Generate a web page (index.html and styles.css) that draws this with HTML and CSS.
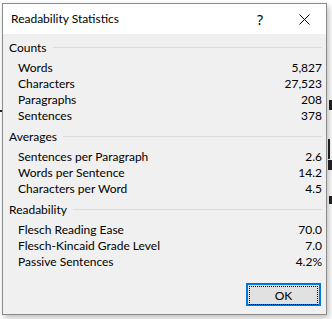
FILE: index.html
```html
<!DOCTYPE html>
<html lang="en">
<head>
    <meta charset="UTF-8">
    <title>Readability Statistics</title>
    <link rel="stylesheet" href="styles.css">
</head>
<body>
    <!-- bits of the document showing behind the dialog -->
    <div class="doc">
        <i class="mark m1"></i>
        <i class="mark m2"></i>
        <i class="mark m3"></i>
        <i class="mark m4"></i>
        <i class="mark m5"></i>
    </div>

    <div class="dialog">
        <div class="titlebar">
            <span class="title">Readability Statistics</span>
            <span class="tb-btn help">?</span>
            <span class="tb-btn">
                <svg width="11" height="11" viewBox="0 0 11 11"><path d="M0.5 0.5L10.5 10.5M10.5 0.5L0.5 10.5" stroke="#000" stroke-width="1" fill="none"/></svg>
            </span>
        </div>

        <div class="content">
            <div class="section">
                <div class="section-head"><span>Counts</span><i></i></div>
                <div class="row"><span>Words</span><span>5,827</span></div>
                <div class="row"><span>Characters</span><span>27,523</span></div>
                <div class="row"><span>Paragraphs</span><span>208</span></div>
                <div class="row"><span>Sentences</span><span>378</span></div>
            </div>
            <div class="section">
                <div class="section-head"><span>Averages</span><i></i></div>
                <div class="row"><span>Sentences per Paragraph</span><span>2.6</span></div>
                <div class="row"><span>Words per Sentence</span><span>14.2</span></div>
                <div class="row"><span>Characters per Word</span><span>4.5</span></div>
            </div>
            <div class="section">
                <div class="section-head"><span>Readability</span><i></i></div>
                <div class="row"><span>Flesch Reading Ease</span><span>70.0</span></div>
                <div class="row"><span>Flesch-Kincaid Grade Level</span><span>7.0</span></div>
                <div class="row"><span>Passive Sentences</span><span>4.2%</span></div>
            </div>

            <div class="footer">
                <button class="ok-button"><span>OK</span></button>
            </div>
        </div>
    </div>
</body>
</html>
```

FILE: styles.css
```css
body {
    margin: 0;
    width: 332px;
    height: 319px;
    overflow: hidden;
    background-color: #fff;
    font-family: Lato, "Noto Sans", sans-serif;
    font-size: 12px;
    color: #000;
    position: relative;
}
.doc {
    position: absolute;
    inset: 0;
}
.mark {
    position: absolute;
    background-color: #222;
}
.m1 { left: 329px; top: 100px; width: 3px; height: 10px; }
.m2 { left: 328px; top: 139px; width: 2px; height: 20px; }
.m3 { left: 328px; top: 160px; width: 4px; height: 10px; }
.m4 { left: 329px; top: 196px; width: 3px; height: 8px; }
.m5 { left: 0; top: 110px; width: 2px; height: 2px; }

.dialog {
    position: relative;
    margin: 3px 0 0 2px;
    width: 323px;
    height: 310px;
    border: 1px solid #8a8a8a;
    background-color: #f0f0f0;
    display: flex;
    flex-direction: column;
    box-shadow: 2px 3px 6px rgba(0, 0, 0, 0.25);
}
.titlebar {
    height: 30px;
    background-color: #fff;
    display: flex;
    align-items: center;
}
.title {
    flex: 1;
    padding-left: 8px;
    line-height: 30px;
}
.tb-btn {
    width: 44px;
    height: 30px;
    display: flex;
    align-items: center;
    justify-content: center;
}
.help {
    font-family: "Noto Sans", sans-serif;
    font-size: 14px;
}
.content {
    flex: 1;
    padding: 5px 4px 0 6px;
    display: flex;
    flex-direction: column;
}
.section {
    margin-bottom: 4px;
}
.section-head {
    display: flex;
    align-items: center;
    height: 16px;
    margin-bottom: 5px;
}
.section-head i {
    flex: 1;
    height: 1px;
    margin-left: 6px;
    background-color: #dcdcdc;
}
.row {
    display: flex;
    justify-content: space-between;
    height: 16px;
    line-height: 16px;
    padding-left: 9px;
}
.footer {
    display: flex;
    justify-content: flex-end;
    margin-top: 9px;
    padding-right: 1px;
}
.ok-button {
    width: 75px;
    height: 23px;
    padding: 1px;
    border: 2px solid #0078d7;
    background-color: #e1e1e1;
    font-family: inherit;
    font-size: 12px;
    color: #000;
}
.ok-button span {
    display: flex;
    align-items: center;
    justify-content: center;
    height: 100%;
    border: 1px dotted #000;
}
```
